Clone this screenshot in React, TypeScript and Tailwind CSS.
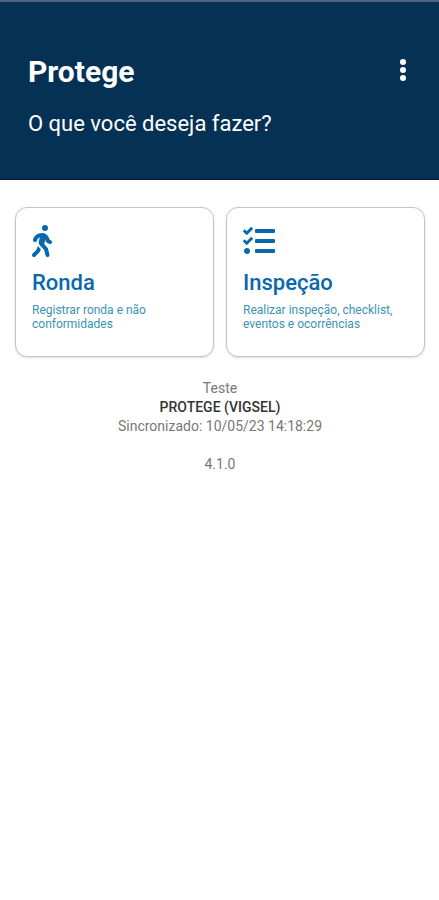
import React from "react";
import { FaPersonWalking } from "react-icons/fa6";
import { FaTasks } from "react-icons/fa";

type CardProps = {
  icon: React.ReactNode;
  title: string;
  description: string;
};

function ActionCard({ icon, title, description }: CardProps) {
  return (
    <button
      type="button"
      className="flex h-[150px] flex-col items-start rounded-xl border border-[#c4c4c6] bg-white px-4 pt-[17px] text-left shadow-sm"
    >
      <span className="flex h-8 items-center text-[#0868ad]">{icon}</span>
      <span className="mt-3 text-[22px] leading-7 font-medium text-[#0868ad]">{title}</span>
      <span className="mt-1.5 text-[12px] leading-[14px] text-[#3b93b5]">{description}</span>
    </button>
  );
}

export default function App() {
  return (
    <div className="min-h-screen bg-white font-[Roboto,sans-serif]">
      <header className="h-[180px] border-t-2 border-b border-t-[#50657d] border-b-[#06152e] bg-[#053154] px-7 pt-[50px] text-white">
        <div className="flex items-center justify-between">
          <h1 className="text-[30px] leading-10 font-bold">Protege</h1>
          <button type="button" aria-label="Mais opções" className="flex h-10 w-4 items-center justify-center">
            <svg viewBox="0 0 8 24" className="mb-1 h-6 w-2 fill-white" aria-hidden="true">
              <circle cx="4" cy="4" r="3" />
              <circle cx="4" cy="12" r="3" />
              <circle cx="4" cy="20" r="3" />
            </svg>
          </button>
        </div>
        <p className="mt-4 text-[22px] leading-8">O que você deseja fazer?</p>
      </header>
      <main className="pt-[27px] pr-[14px] pl-[15px]">
        <div className="grid grid-cols-2 gap-3">
          <ActionCard
            icon={<FaPersonWalking size={32} className="-ml-1.5" aria-hidden="true" />}
            title="Ronda"
            description="Registrar ronda e não conformidades"
          />
          <ActionCard
            icon={<FaTasks size={32} aria-hidden="true" />}
            title="Inspeção"
            description="Realizar inspeção, checklist, eventos e ocorrências"
          />
        </div>
        <div className="mt-[22px] text-center text-[14px] leading-[19px] text-[#777777]">
          <p>Teste</p>
          <p className="font-medium text-[#333333]">PROTEGE (VIGSEL)</p>
          <p>Sincronizado: 10/05/23 14:18:29</p>
          <p className="mt-[19px]">4.1.0</p>
        </div>
      </main>
    </div>
  );
}
